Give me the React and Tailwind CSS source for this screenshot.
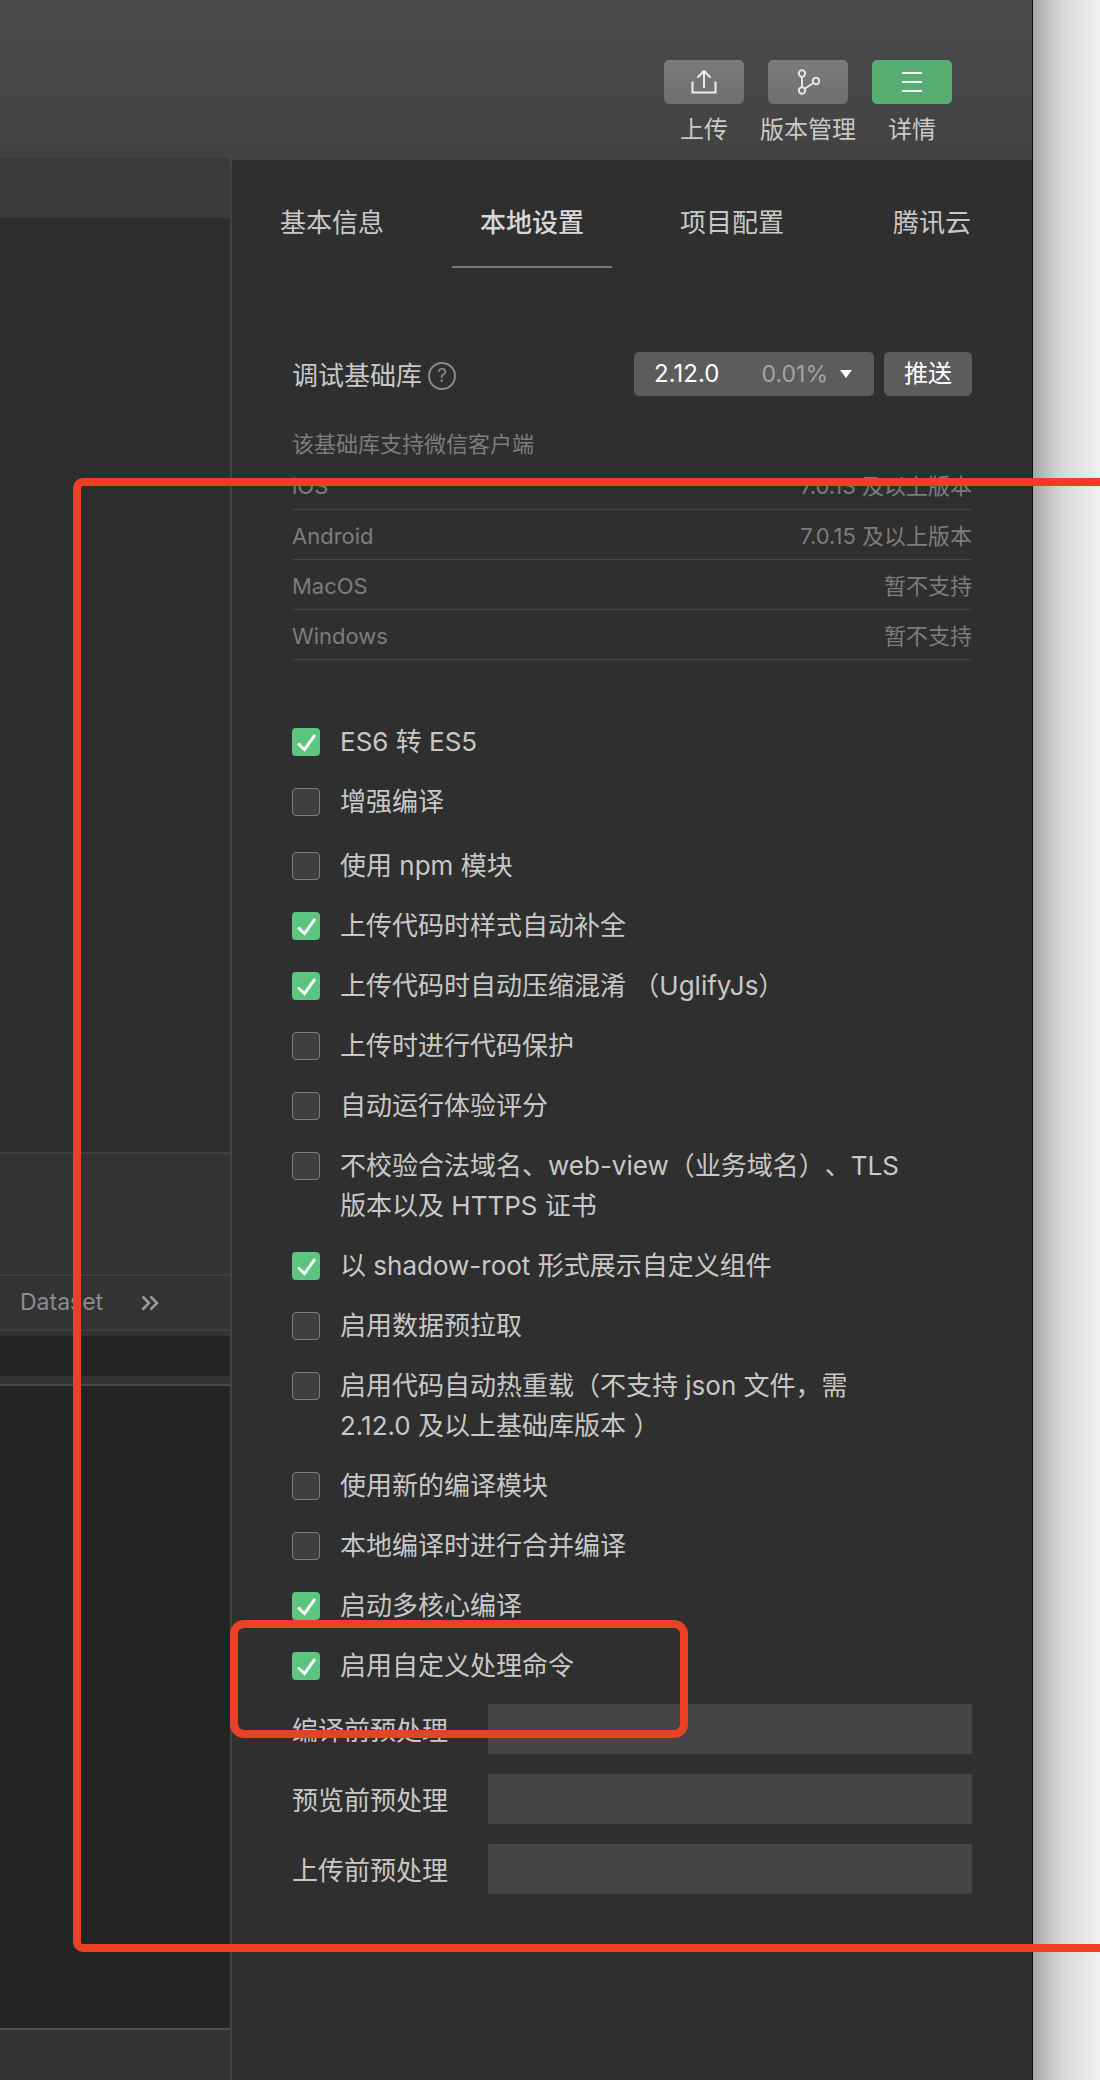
import React from "react";

const FONT = "font-['Inter','Noto_Sans_CJK_SC',sans-serif] [text-spacing-trim:space-all]";

const platforms = [
  ["iOS", "7.0.13 及以上版本"],
  ["Android", "7.0.15 及以上版本"],
  ["MacOS", "暂不支持"],
  ["Windows", "暂不支持"],
];

const options = [
  { label: "ES6 转 ES5", on: true, h: "h-[60px]" },
  { label: "增强编译", h: "h-[64px]" },
  { label: "使用 npm 模块", h: "h-[60px]" },
  { label: "上传代码时样式自动补全", on: true, h: "h-[60px]" },
  { label: "上传代码时自动压缩混淆 （UglifyJs）", on: true, h: "h-[60px]" },
  { label: "上传时进行代码保护", h: "h-[60px]" },
  { label: "自动运行体验评分", h: "h-[60px]" },
  { label: "不校验合法域名、web-view（业务域名）、TLS", more: "版本以及 HTTPS 证书", h: "h-[100px]" },
  { label: "以 shadow-root 形式展示自定义组件", on: true, h: "h-[60px]" },
  { label: "启用数据预拉取", h: "h-[60px]" },
  { label: "启用代码自动热重载（不支持 json 文件，需", more: "2.12.0 及以上基础库版本 ）", h: "h-[100px]" },
  { label: "使用新的编译模块", h: "h-[60px]" },
  { label: "本地编译时进行合并编译", h: "h-[60px]" },
  { label: "启动多核心编译", on: true, h: "h-[60px]" },
  { label: "启用自定义处理命令", on: true, h: "h-[60px]" },
];

function Checkbox({ on }) {
  if (on) {
    return (
      <div className="w-7 h-7 shrink-0 rounded-[4px] bg-[#5bc580]">
        <svg width="28" height="28" viewBox="0 0 28 28" fill="none">
          <path d="M6 15.5 L12.5 21.5 L23 7" stroke="#fff" strokeWidth="3" />
        </svg>
      </div>
    );
  }
  return <div className="w-7 h-7 shrink-0 rounded-[4px] bg-[#404040] border border-[#7d7d7d]" />;
}

function ToolButton({ label, green, children }) {
  return (
    <div className="w-[80px] flex flex-col items-center">
      <div
        className={`w-[80px] h-[44px] rounded-[5px] flex items-center justify-center ${
          green ? "bg-[#55ae72]" : "bg-gradient-to-b from-[#7b7b7b] to-[#6f6f6f]"
        }`}
      >
        {children}
      </div>
      <div className="mt-[9px] text-[24px] leading-[34px] whitespace-nowrap text-[#c9c9c9]">{label}</div>
    </div>
  );
}

export default function App() {
  return (
    <div className={`relative w-[1100px] h-[2080px] overflow-hidden bg-[#ececec] ${FONT}`}>
      <div className="flex h-full w-[1033px] flex-col border-r border-[#141414]">
        {/* top toolbar */}
        <div className="h-[160px] shrink-0 bg-gradient-to-b from-[#4a4a4a] to-[#424242] flex justify-end pt-[60px] pr-[80px] gap-6">
          <ToolButton label="上传">
            <svg width="26" height="26" viewBox="0 0 26 26" fill="none" stroke="#eee" strokeWidth="2">
              <path d="M1.5 12.5 V23.5 H24.5 V12.5" />
              <path d="M13 19 V2 M6.5 8.5 L13 2 L19.5 8.5" />
            </svg>
          </ToolButton>
          <ToolButton label="版本管理">
            <svg width="24" height="26" viewBox="0 0 24 26" fill="none" stroke="#e4e4e4" strokeWidth="2">
              <circle cx="6" cy="4.5" r="3.2" />
              <circle cx="6" cy="21.5" r="3.2" />
              <circle cx="20" cy="12" r="3.2" />
              <path d="M6 8 V18 M9 19.5 L17.2 14" />
            </svg>
          </ToolButton>
          <ToolButton label="详情" green>
            <div className="w-5 flex flex-col gap-[7px]">
              <div className="h-[2px] bg-white" />
              <div className="h-[2px] bg-white" />
              <div className="h-[2px] bg-white" />
            </div>
          </ToolButton>
        </div>

        <div className="flex flex-1 min-h-0 border-r-2 border-[#4a4a4a]">
          {/* left editor column */}
          <div className="w-[230px] shrink-0 flex flex-col bg-[#2e2e2e] -mt-[2px] relative">
            <div className="h-[60px] bg-[#3a3a3a] shrink-0" />
            <div className="h-[934px] shrink-0 bg-[#2e2e2e]" />
            <div className="h-[122px] shrink-0 border-t-2 border-[#3f3f3f] bg-[#333]" />
            <div className="h-[57px] shrink-0 border-y-2 border-[#3f3f3f] bg-[#333] flex items-center pl-5 gap-[38px]">
              <span className="text-[23px] text-[#8c8c8c]">Dataset</span>
              <span className="text-[#9a9a9a]">
                <svg width="18" height="16" viewBox="0 0 18 16" fill="none" stroke="currentColor" strokeWidth="2.6">
                  <path d="M1.5 1.5 L8 8 L1.5 14.5 M9.5 1.5 L16 8 L9.5 14.5" />
                </svg>
              </span>
            </div>
            <div className="h-[5px] shrink-0 bg-[#333]" />
            <div className="h-[40px] shrink-0 bg-[#242424]" />
            <div className="h-[10px] shrink-0 bg-[#333] border-b-2 border-[#4a4a4a]" />
            <div className="flex-1 bg-[#242424]" />
            <div className="h-[52px] shrink-0 border-t-2 border-[#4f4f4f] bg-[#333]" />
          </div>

          {/* settings panel */}
          <div className="relative flex-1 border-l-2 border-[#424242] bg-[#2f2f2f] text-[#c8c8c8]">
            <div className="-ml-[2px] h-[4px] w-[2px] -mt-[2px] bg-[#464646]" />
            <div className="-mt-[2px] h-[108px] flex text-[26px] overflow-hidden">
              {["基本信息", "本地设置", "项目配置", "腾讯云"].map((tab, i) => (
                <div key={tab} className="w-[200px] shrink-0 flex flex-col items-center justify-end">
                  <div className={`w-[160px] h-[60px] pb-[30px] flex items-center justify-center border-b-2 ${
                    i === 1 ? "border-[#777] font-medium text-[#d8d8d8]" : "border-transparent"
                  }`}>
                    {tab}
                  </div>
                </div>
              ))}
            </div>

            <div className="ml-[60px] w-[680px] pt-[84px]">
              <div className="flex items-center h-[44px]">
                <span className="text-[26px] mt-[2px] whitespace-nowrap">调试基础库</span>
                <span className="ml-[6px] mt-[4px] w-[28px] h-[28px] rounded-full border-2 border-[#8a8a8a] text-[#8a8a8a] text-[19px] flex items-center justify-center">?</span>
                <div className="ml-auto w-[240px] h-[44px] rounded-[5px] bg-[#5c5c5c] flex items-center pl-[20px] pr-[22px] text-[24px] text-white">
                  <span>2.12.0</span>
                  <span className="ml-auto text-[23px] text-[#a4a4a4]">0.01%</span>
                  <span className="ml-[12px] w-0 h-0 border-x-[6px] border-x-transparent border-t-[8px] border-t-white" />
                </div>
                <div className="ml-[10px] w-[88px] h-[44px] rounded-[5px] bg-[#5c5c5c] flex items-center justify-center text-[24px] text-white">推送</div>
              </div>

              <div className="mt-[32px] text-[22px] leading-[32px] text-[#7d7d7d]">该基础库支持微信客户端</div>

              <div className="text-[22px] text-[#7d7d7d]">
                {platforms.map(([name, ver]) => (
                  <div key={name} className="h-[50px] pt-[3px] flex items-center justify-between border-b border-[#444]">
                    <span>{name}</span>
                    <span>{ver}</span>
                  </div>
                ))}
              </div>

              <div className="mt-[52px] text-[26px]">
                {options.map((o) => (
                  <div key={o.label} className={`${o.h} flex items-start gap-[20px] pt-[16px]`}>
                    <Checkbox on={o.on} />
                    <div className="leading-[40px] -mt-[6px] whitespace-nowrap">
                      {o.label}
                      {o.more && <div>{o.more}</div>}
                    </div>
                  </div>
                ))}
              </div>

              <div className="flex flex-col gap-5 text-[26px] mt-[8px]">
                {["编译前预处理", "预览前预处理", "上传前预处理"].map((t) => (
                  <div key={t} className="flex items-center justify-between">
                    <span className="mt-[2px]">{t}</span>
                    <div className="w-[484px] h-[50px] rounded-[2px] bg-[#454545]" />
                  </div>
                ))}
              </div>
            </div>
          </div>
        </div>
      </div>

      {/* window drop shadow */}
      <div className="absolute top-0 left-[1033px] h-full w-[67px] bg-gradient-to-r from-[#a6a6a6] via-[#d6d6d6] via-40% to-[#f0f0f0]" />

      {/* red annotation boxes */}
      <div className="absolute left-[73px] top-[478px] w-[1100px] h-[1474px] rounded-[10px] border-[8px] border-[#ea4126]" />
      <div className="absolute left-[230px] top-[1620px] w-[458px] h-[118px] rounded-[14px] border-[8px] border-[#ea4126]" />
    </div>
  );
}
